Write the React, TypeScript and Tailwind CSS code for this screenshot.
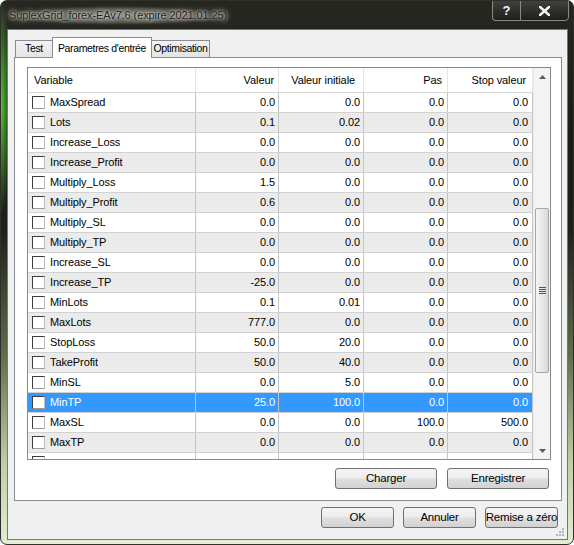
const rows: string[][] = [
  ["MaxSpread", "0.0", "0.0", "0.0", "0.0"],
  ["Lots", "0.1", "0.02", "0.0", "0.0"],
  ["Increase_Loss", "0.0", "0.0", "0.0", "0.0"],
  ["Increase_Profit", "0.0", "0.0", "0.0", "0.0"],
  ["Multiply_Loss", "1.5", "0.0", "0.0", "0.0"],
  ["Multiply_Profit", "0.6", "0.0", "0.0", "0.0"],
  ["Multiply_SL", "0.0", "0.0", "0.0", "0.0"],
  ["Multiply_TP", "0.0", "0.0", "0.0", "0.0"],
  ["Increase_SL", "0.0", "0.0", "0.0", "0.0"],
  ["Increase_TP", "-25.0", "0.0", "0.0", "0.0"],
  ["MinLots", "0.1", "0.01", "0.0", "0.0"],
  ["MaxLots", "777.0", "0.0", "0.0", "0.0"],
  ["StopLoss", "50.0", "20.0", "0.0", "0.0"],
  ["TakeProfit", "50.0", "40.0", "0.0", "0.0"],
  ["MinSL", "0.0", "5.0", "0.0", "0.0"],
  ["MinTP", "25.0", "100.0", "0.0", "0.0"],
  ["MaxSL", "0.0", "0.0", "100.0", "500.0"],
  ["MaxTP", "0.0", "0.0", "0.0", "0.0"],
  ["", "", "", "", ""],
];

const SELECTED = 15;

const Checkbox = () => (
  <div className="w-[13px] h-[13px] shrink-0 bg-white border-l border-t border-[#3c3c3c] border-r-[#bdbdbd] border-b-[#9a9a9a] border-r border-b" />
);

const Button = ({ label, w }: { label: string; w: string }) => (
  <button
    className={`${w} h-[21px] flex items-center justify-center whitespace-nowrap rounded-[3px] border border-[#707070] bg-[linear-gradient(to_bottom,#f4f4f4_0%,#ececec_48%,#dfdfdf_52%,#d2d2d2_100%)] text-[11.5px] tracking-[-0.2px] text-black`}
  >
    {label}
  </button>
);

const Row = ({ r, i }: { r: string[]; i: number }) => {
  const sel = i === SELECTED;
  const bg = sel ? "bg-[#3399ff] text-white" : i % 2 === 1 ? "bg-[#ebebeb]" : "bg-white";
  return (
    <div className={`flex h-[20px] shrink-0 border-b border-[#d2d2d2] ${bg}`}>
      <div className="w-[168px] flex items-center pl-[4px] gap-[5px] border-r border-[#c4c4c4]">
        <Checkbox />
        <span>{r[0]}</span>
      </div>
      <div className="w-[83px] flex items-center justify-end pr-[3px] border-r border-[#c4c4c4]">{r[1]}</div>
      <div className="w-[85px] flex items-center justify-end pr-[3px] border-r border-[#c4c4c4]">{r[2]}</div>
      <div className="w-[84px] flex items-center justify-end pr-[3px] border-r border-[#c4c4c4]">{r[3]}</div>
      <div className="w-[85px] flex items-center justify-end pr-[4px] border-r border-[#c4c4c4]">{r[4]}</div>
    </div>
  );
};

const Scrollbar = () => (
  <div className="w-[17px] flex flex-col bg-[#f3f3f3] border-l border-[#ececec]">
    <div className="h-[17px] flex items-center justify-center">
      <svg width="7" height="4" viewBox="0 0 7 4">
        <path d="M0 4 L3.5 0 L7 4 Z" fill="#5a5a5a" />
      </svg>
    </div>
    <div className="flex-1 flex flex-col">
      <div className="mt-[123px] mx-[1px] h-[165px] rounded-[2px] border border-[#a6a6a6] bg-[linear-gradient(to_right,#f4f4f4,#e8e8e8_50%,#d8d8d8)] flex items-center justify-center">
        <div className="flex flex-col gap-[1px]">
          <div className="w-[7px] h-[1px] bg-[#555]" />
          <div className="w-[7px] h-[1px] bg-[#555]" />
          <div className="w-[7px] h-[1px] bg-[#555]" />
          <div className="w-[7px] h-[1px] bg-[#555]" />
        </div>
      </div>
    </div>
    <div className="h-[17px] flex items-center justify-center">
      <svg width="7" height="4" viewBox="0 0 7 4">
        <path d="M0 0 L7 0 L3.5 4 Z" fill="#5a5a5a" />
      </svg>
    </div>
  </div>
);

export default function App() {
  return (
    <div className="w-[574px] h-[545px] flex flex-col rounded-[7px] border border-[#30302b] overflow-hidden font-['Liberation_Sans',Arial,sans-serif] text-[11px] tracking-[-0.1px] text-black bg-[radial-gradient(10px_110px_at_0_105px,rgba(90,230,60,0.85),transparent),linear-gradient(180deg,#272722_0%,#1b1b18_25%,#1e201a_42%,#5f6c4c_65%,#bfcda6_85%,#e4ecd4_100%)]">
      {/* title bar */}
      <div className="h-[28px] shrink-0 flex items-start">
        <div className="ml-[4px] mt-[5px] px-[4px] py-[1px] rounded-[8px] bg-[radial-gradient(closest-side,rgba(215,215,200,0.5),rgba(200,200,185,0.28)_70%,transparent)] whitespace-nowrap text-[11px] tracking-[-0.1px] text-[#222] [text-shadow:0_0_3px_#f0f0e8,0_0_7px_#e0e0d0]">
          SuplexGrid_forex-EAv7.6 (expire 2021.01.25)
        </div>
        <div className="ml-auto mr-[4px] flex -mt-[1px]">
          <div className="w-[28px] h-[21px] flex items-center justify-center rounded-bl-[4px] border border-[#8a8a80] border-r-0 bg-[linear-gradient(to_bottom,rgba(255,255,255,0.12),rgba(0,0,0,0.2))] text-[13px] font-bold text-[#f2f2f2]">
            ?
          </div>
          <div className="w-[49px] h-[21px] flex items-center justify-center rounded-br-[4px] border border-[#8a8a80] bg-[linear-gradient(to_bottom,rgba(255,255,255,0.12),rgba(0,0,0,0.2))]">
            <svg width="11" height="10" viewBox="0 0 11 10">
              <path d="M1 1 L10 9 M10 1 L1 9" stroke="#f2f2f2" strokeWidth="2.6" strokeLinecap="square" />
            </svg>
          </div>
        </div>
      </div>

      {/* client area */}
      <div className="ml-[6px] mr-[5px] h-[511px] shrink-0 flex flex-col border border-[#767676] bg-[#f0f0f0] pt-[7px] relative">
        {/* tabs */}
        <div className="h-[20px] flex items-end pl-[7px] whitespace-nowrap text-[10.5px] tracking-[-0.35px]">
          <div className="w-[38px] h-[17px] flex items-center justify-center border border-b-0 border-[#898c95] bg-[linear-gradient(to_bottom,#f2f2f2,#e4e4e4)]">
            Test
          </div>
          <div className="relative z-10 -ml-[1px] -mb-[1px] w-[100px] h-[21px] flex items-start pt-[3px] justify-center border border-b-0 border-[#898c95] bg-white">
            Parametres d'entrée
          </div>
          <div className="-ml-[1px] w-[59px] h-[17px] flex items-center justify-center border border-b-0 border-[#898c95] bg-[linear-gradient(to_bottom,#f2f2f2,#e4e4e4)]">
            Optimisation
          </div>
        </div>

        {/* panel */}
        <div className="ml-[6px] mr-[5px] h-[444px] flex flex-col border border-[#898c95] bg-white pt-[9px] pl-[12px] pr-[10px]">
          <div className="h-[393px] flex border border-[#828790] bg-white">
            <div className="w-[505px] flex flex-col overflow-hidden">
              <div className="h-[25px] shrink-0 flex border-b border-[#d5d5d5] bg-white">
                <div className="w-[168px] flex items-center pl-[6px] border-r border-[#e5e5e5]">Variable</div>
                <div className="w-[83px] flex items-center justify-end pr-[4px] border-r border-[#e5e5e5]">Valeur</div>
                <div className="w-[85px] flex items-center justify-end pr-[8px] border-r border-[#e5e5e5]">Valeur initiale</div>
                <div className="w-[84px] flex items-center justify-end pr-[5px] border-r border-[#e5e5e5]">Pas</div>
                <div className="w-[85px] flex items-center justify-end pr-[6px] border-r border-[#e5e5e5]">Stop valeur</div>
              </div>
              {rows.map((r, i) => (
                <Row key={i} r={r} i={i} />
              ))}
            </div>
            <Scrollbar />
          </div>
          <div className="mt-[8px] flex justify-end gap-[10px] pr-[2px]">
            <Button label="Charger" w="w-[102px]" />
            <Button label="Enregistrer" w="w-[102px]" />
          </div>
        </div>

        {/* dialog buttons */}
        <div className="mt-[6px] flex justify-end gap-[9px] pr-[9px]">
          <Button label="OK" w="w-[73px]" />
          <Button label="Annuler" w="w-[73px]" />
          <Button label="Remise a zéro" w="w-[73px]" />
        </div>

        {/* size grip */}
        <svg className="absolute right-[2px] bottom-[2px]" width="10" height="10" viewBox="0 0 10 10">
          <g fill="#b4b4b4">
            <rect x="7" y="1" width="2" height="2" />
            <rect x="4" y="4" width="2" height="2" />
            <rect x="7" y="4" width="2" height="2" />
            <rect x="1" y="7" width="2" height="2" />
            <rect x="4" y="7" width="2" height="2" />
            <rect x="7" y="7" width="2" height="2" />
          </g>
        </svg>
      </div>
    </div>
  );
}
